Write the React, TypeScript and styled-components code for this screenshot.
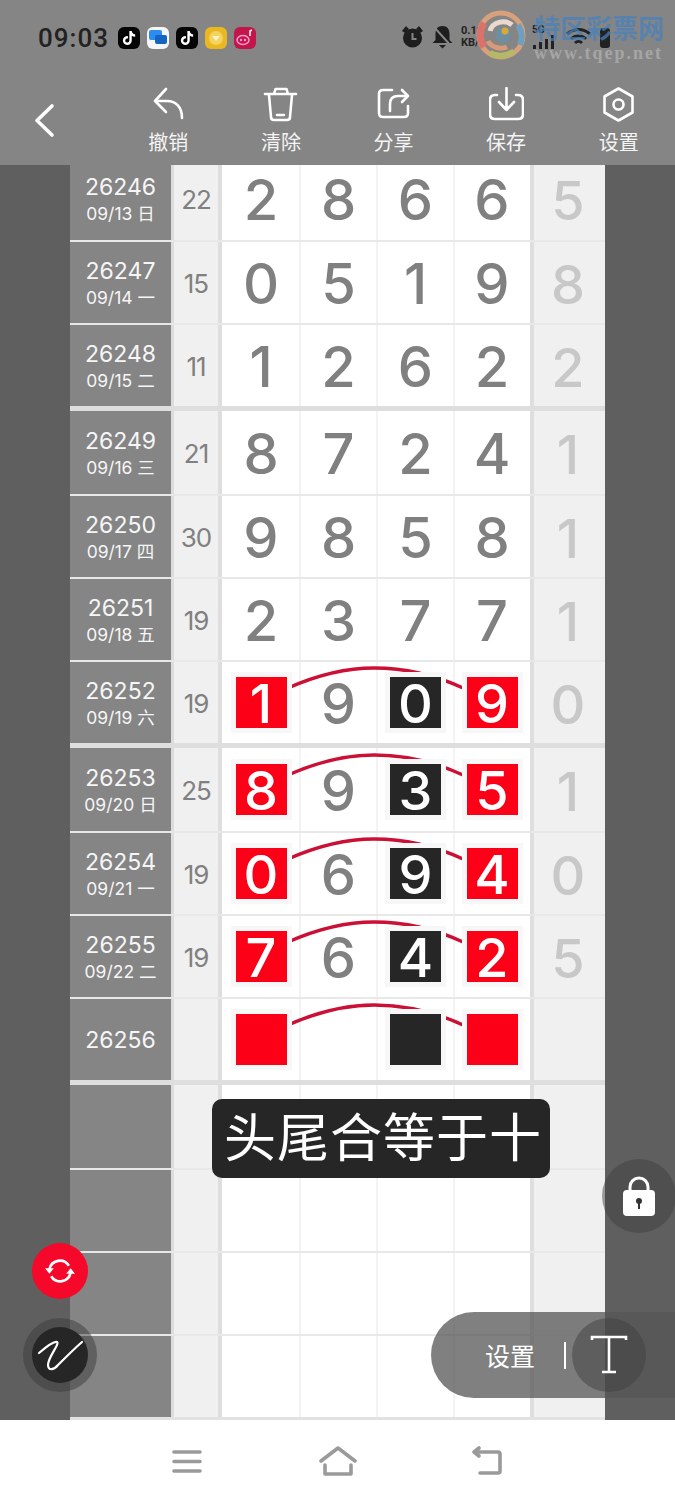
import { createGlobalStyle } from 'styled-components';
import styled from 'styled-components';
import { FaTiktok } from 'react-icons/fa6';

type Row = {
  id: string;
  date?: string;
  sum?: string;
  digits?: string[];
  tail?: string;
  marked?: boolean;
  first?: boolean;
  last?: boolean;
};

const rows: Row[] = [
  { id: '26246', date: '09/13 日', sum: '22', digits: ['2', '8', '6', '6'], tail: '5', first: true },
  { id: '26247', date: '09/14 一', sum: '15', digits: ['0', '5', '1', '9'], tail: '8' },
  { id: '26248', date: '09/15 二', sum: '11', digits: ['1', '2', '6', '2'], tail: '2', last: true },
  { id: '26249', date: '09/16 三', sum: '21', digits: ['8', '7', '2', '4'], tail: '1', first: true },
  { id: '26250', date: '09/17 四', sum: '30', digits: ['9', '8', '5', '8'], tail: '1' },
  { id: '26251', date: '09/18 五', sum: '19', digits: ['2', '3', '7', '7'], tail: '1' },
  { id: '26252', date: '09/19 六', sum: '19', digits: ['1', '9', '0', '9'], tail: '0', marked: true, last: true },
  { id: '26253', date: '09/20 日', sum: '25', digits: ['8', '9', '3', '5'], tail: '1', marked: true, first: true },
  { id: '26254', date: '09/21 一', sum: '19', digits: ['0', '6', '9', '4'], tail: '0', marked: true },
  { id: '26255', date: '09/22 二', sum: '19', digits: ['7', '6', '4', '2'], tail: '5', marked: true },
  { id: '26256', digits: ['', '', '', ''], marked: true, last: true },
  { id: '', digits: ['', '', '', ''], first: true },
  { id: '', digits: ['', '', '', ''] },
  { id: '', digits: ['', '', '', ''] },
  { id: '', digits: ['', '', '', ''] },
];

const GlobalStyle = createGlobalStyle`
  html, body {
    margin: 0;
    padding: 0;
    background: #ffffff;
    font-family: Inter, "Noto Sans CJK SC", sans-serif;
  }
`;

const Page = styled.div`
  position: relative;
  width: 675px;
  height: 1500px;
  overflow: hidden;
  display: flex;
  flex-direction: column;
`;

const Header = styled.header`
  height: 165px;
  flex: none;
  background: #858585;
`;

const StatusBar = styled.div`
  height: 75px;
  display: flex;
  align-items: center;
  padding-left: 38px;
  box-sizing: border-box;
`;

const Clock = styled.span`
  font-family: Roboto, sans-serif;
  font-size: 26px;
  font-weight: 500;
  letter-spacing: 1px;
  color: #222222;
  margin-right: 9px;
`;

const AppIcons = styled.div`
  display: flex;
  gap: 7px;
`;

const AppIcon = styled.div<{ $bg: string }>`
  width: 22px;
  height: 22px;
  border-radius: 6px;
  background: ${(p) => p.$bg};
  display: flex;
  align-items: center;
  justify-content: center;
  color: #ffffff;
  font-size: 14px;
`;

const SystemIcons = styled.div`
  position: absolute;
  left: 401px;
  top: 25px;
  display: flex;
  align-items: center;
  gap: 7px;
`;

const NetSpeed = styled.div`
  width: 64px;
  font-family: Roboto, sans-serif;
  font-size: 11px;
  font-weight: 700;
  line-height: 12px;
  color: #222222;
`;

const SignalBlock = styled.div`
  display: flex;
  flex-direction: column;
  font-family: Roboto, sans-serif;
  font-size: 10px;
  font-weight: 700;
  line-height: 10px;
  color: #222222;
`;

const Watermark = styled.div`
  position: absolute;
  left: 476px;
  top: 9px;
  display: flex;
  gap: 8px;
`;

const WatermarkText = styled.div`
  display: flex;
  flex-direction: column;
  width: 134px;
`;

const WatermarkTitle = styled.span`
  font-family: "Noto Sans CJK SC", sans-serif;
  font-size: 26px;
  font-weight: 700;
  line-height: 35px;
  color: rgba(70, 130, 190, 0.72);
`;

const WatermarkUrl = styled.span`
  font-family: "Liberation Serif", serif;
  font-size: 18px;
  font-weight: 700;
  line-height: 18px;
  letter-spacing: 2px;
  white-space: nowrap;
  color: #a6a6a6;
`;

const Toolbar = styled.div`
  height: 90px;
  display: flex;
`;

const BackButton = styled.div`
  width: 112px;
  flex: none;
  padding: 28px 0 0 33px;
  box-sizing: border-box;
`;

const ToolItem = styled.div`
  flex: 1;
  display: flex;
  flex-direction: column;
  align-items: center;
  padding-top: 12px;
`;

const ToolLabel = styled.span`
  margin-top: 6px;
  font-family: "Noto Sans CJK SC", sans-serif;
  font-size: 20px;
  line-height: 28px;
  color: #f4f4f4;
`;

const ToolIcon = styled.svg.attrs({ viewBox: '0 0 35 35', fill: 'none' })`
  width: 35px;
  height: 35px;
  stroke: #ffffff;
  stroke-width: 2.6;
  stroke-linecap: round;
  stroke-linejoin: round;
`;

const Main = styled.main`
  flex: 1;
  background: #5f5f5f;
  display: flex;
  justify-content: center;
  overflow: hidden;
`;

const Table = styled.div`
  width: 535px;
  height: 1255px;
  overflow: hidden;
`;

const TableRow = styled.div<{ $first?: boolean; $last?: boolean }>`
  display: grid;
  grid-template-columns: 104px 48px 308px 75px;
  height: ${(p) => (p.$first ? 83 : 81)}px;
  border-bottom: ${(p) => (p.$last ? '5px solid #dedede' : '2px solid #e8e8e8')};
  &:first-child {
    margin-top: -8px;
  }
  &:last-child {
    border-bottom-width: 3px;
    border-bottom-color: #e2e2e2;
  }
`;

const LabelCell = styled.div`
  background: #858585;
  border-right: 3px solid #dcdcdc;
  display: flex;
  flex-direction: column;
  align-items: center;
  justify-content: center;
  color: #f6f6f6;
`;

const IssueId = styled.span`
  font-size: 23px;
  line-height: 30px;
`;

const IssueDate = styled.span`
  font-size: 17.5px;
  line-height: 24px;
  white-space: nowrap;
`;

const SumCell = styled.div`
  background: #f0f0f0;
  border-right: 4px solid #dedede;
  display: flex;
  align-items: center;
  justify-content: center;
  padding-top: 2px;
  font-size: 26px;
  letter-spacing: -1px;
  color: #808080;
`;

const DigitGrid = styled.div`
  position: relative;
  display: grid;
  grid-template-columns: 78px 77px 77px 76px;
  background: #ffffff;
`;

const DigitCell = styled.div`
  display: flex;
  align-items: center;
  justify-content: center;
  font-size: 56px;
  font-weight: 500;
  color: #808080;
  box-shadow: 1px 0 #f3f3f3, inset -1px 0 #f3f3f3;
  &:last-of-type {
    box-shadow: none;
  }
`;

const PlainDigit = styled.span`
  padding-top: 3px;
`;

const Square = styled.div<{ $color: string }>`
  position: relative;
  z-index: 1;
  width: 51px;
  height: 51px;
  background: ${(p) => p.$color};
  box-shadow: 0 0 0 5px #f7f7f7;
  color: #ffffff;
  display: flex;
  align-items: center;
  justify-content: center;
  padding-top: 1px;
  box-sizing: border-box;
  font-size: 54px;
  font-weight: 500;
  line-height: 51px;
`;

const ArcLine = styled.svg.attrs({ viewBox: '0 0 308 40', fill: 'none' })`
  position: absolute;
  left: 0;
  top: calc(50% - 40px);
  width: 308px;
  height: 40px;
  stroke: #cc0f35;
  stroke-width: 3.4;
`;

const TailCell = styled.div`
  background: #f0f0f0;
  border-left: 4px solid #dedede;
  display: flex;
  align-items: center;
  justify-content: center;
  padding: 3px 3px 0 0;
  font-size: 54px;
  font-weight: 500;
  color: #c8c8c8;
`;

const Toast = styled.div`
  position: absolute;
  left: 212px;
  top: 1099px;
  width: 338px;
  height: 79px;
  padding-left: 4px;
  box-sizing: border-box;
  border-radius: 10px;
  background: #262626;
  color: #ffffff;
  font-family: "Noto Sans CJK SC", sans-serif;
  font-size: 52px;
  letter-spacing: 1px;
  line-height: 71px;
  text-align: center;
  white-space: nowrap;
`;

const RoundButton = styled.div<{ $left: number; $top: number; $size: number; $bg: string }>`
  position: absolute;
  left: ${(p) => p.$left}px;
  top: ${(p) => p.$top}px;
  width: ${(p) => p.$size}px;
  height: ${(p) => p.$size}px;
  border-radius: 50%;
  background: ${(p) => p.$bg};
  display: flex;
  align-items: center;
  justify-content: center;
`;

const SignInner = styled.div`
  width: 56px;
  height: 56px;
  border-radius: 50%;
  background: #262626;
  display: flex;
  align-items: center;
  justify-content: center;
`;

const SettingsPill = styled.div`
  position: absolute;
  left: 431px;
  top: 1312px;
  width: 244px;
  height: 86px;
  border-radius: 43px 0 0 43px;
  background: rgba(85, 85, 85, 0.75);
  display: flex;
  align-items: center;
  padding-left: 54px;
  box-sizing: border-box;
`;

const PillLabel = styled.span`
  width: 50px;
  font-family: "Noto Sans CJK SC", sans-serif;
  font-size: 25px;
  line-height: 30px;
  white-space: nowrap;
  color: #ffffff;
`;

const PillDivider = styled.span`
  width: 2px;
  height: 27px;
  margin-left: 29px;
  background: #ffffff;
`;

const TextTool = styled.div`
  width: 74px;
  height: 74px;
  margin-left: 6px;
  border-radius: 50%;
  background: rgba(64, 64, 64, 0.5);
  display: flex;
  align-items: center;
  justify-content: center;
`;

const BottomNav = styled.nav`
  height: 80px;
  flex: none;
  background: #ffffff;
  display: grid;
  grid-template-columns: 150px 150px 150px;
  justify-content: center;
  align-items: center;
  justify-items: center;
  padding-top: 2px;
  box-sizing: border-box;
`;

const NavIcon = styled.svg.attrs({ viewBox: '0 0 38 30', fill: 'none' })`
  width: 38px;
  height: 30px;
  stroke: #9a9a9a;
  stroke-width: 3.6;
  stroke-linecap: round;
  stroke-linejoin: round;
`;

function Logo() {
  return (
    <svg width="50" height="52" viewBox="0 0 50 52" fill="none">
      <circle cx="25" cy="26" r="22" stroke="#d9a07c" strokeWidth="5" />
      <path d="M8 14a22 22 0 0 0 0 24" stroke="#d8726a" strokeWidth="7" />
      <path d="M42 16a22 22 0 0 1 2 20" stroke="#6f9fbf" strokeWidth="6" />
      <path d="M14 44a22 22 0 0 0 24-2" stroke="#b3b966" strokeWidth="6" />
      <path d="M14 22c2-9 15-12 22-6" stroke="#e9d9cf" strokeWidth="5" />
      <path d="M12 32c3 6 12 9 19 6" stroke="#d89a78" strokeWidth="5" />
      <circle cx="27" cy="26" r="8" fill="#6f8e9f" />
      <circle cx="29" cy="22" r="3.500" fill="#d9a93a" />
    </svg>
  );
}

function StatusRight() {
  return (
    <SystemIcons>
      <svg width="23" height="24" viewBox="0 0 23 24" fill="#1e1e1e">
        <circle cx="11.500" cy="13" r="9.500" />
        <path d="M1 6l4-5 3 3-4 4zM22 6l-4-5-3 3 4 4z" />
        <path d="M11.500 8v6h4" stroke="#858585" strokeWidth="2" fill="none" />
      </svg>
      <svg width="23" height="24" viewBox="0 0 23 24" fill="#1e1e1e">
        <path d="M11.500 1c5 0 7 3.500 7 8v6l3 3H1.500l3-3V9c0-4.500 2-8 7-8z" />
        <path d="M8 20h7l-3.500 3.500z" />
        <path d="M3 2l18 20" stroke="#858585" strokeWidth="2" />
      </svg>
      <NetSpeed>
        0.10
        <br />
        KB/s
      </NetSpeed>
      <SignalBlock>
        5G
        <svg width="26" height="14" viewBox="0 0 26 14" fill="#222">
          <rect x="1" y="10" width="3" height="4" />
          <rect x="7" y="7" width="3" height="7" />
          <rect x="13" y="4" width="3" height="10" />
          <rect x="19" y="0" width="3" height="14" />
        </svg>
      </SignalBlock>
      <svg width="27" height="22" viewBox="0 0 27 22" fill="none" stroke="#222" strokeWidth="3">
        <path d="M2 8c7-6 16-6 23 0M6 13c4-4 11-4 15 0M10 17c2-2 5-2 7 0" />
      </svg>
      <svg width="12" height="22" viewBox="0 0 12 22" fill="#222">
        <rect x="1" y="2" width="10" height="20" rx="3" />
      </svg>
    </SystemIcons>
  );
}

function Tools() {
  return (
    <Toolbar>
      <BackButton>
        <svg width="24" height="36" viewBox="0 0 24 36" fill="none" stroke="#fff" strokeWidth="3.6" strokeLinecap="round" strokeLinejoin="round">
          <path d="M19 3L4 17.5 19 32" />
        </svg>
      </BackButton>
      <ToolItem>
        <ToolIcon>
          <path d="M15 2L4 14l11 11M4 14h12c9 0 15 6 15 17" />
        </ToolIcon>
        <ToolLabel>撤销</ToolLabel>
      </ToolItem>
      <ToolItem>
        <ToolIcon>
          <path d="M2 7h31M11 7l1.500-5h11L25 7M6 8l2 22q0 3 3 3h13q3 0 3-3l2-22M14 28h7" />
        </ToolIcon>
        <ToolLabel>清除</ToolLabel>
      </ToolItem>
      <ToolItem>
        <ToolIcon>
          <path d="M16 3H7Q3 3 3 7v19q0 4 4 4h21q4 0 4-4v-7M14 24v-7q0-8 8-8h10M26 3l6 6-6 6" />
        </ToolIcon>
        <ToolLabel>分享</ToolLabel>
      </ToolItem>
      <ToolItem>
        <ToolIcon>
          <path d="M8 8H6Q1 8 1 13v14q0 5 5 5h23q5 0 5-5V13q0-5-5-5h-2M17.500 1v22M10 15l7.500 8 7.500-8" />
        </ToolIcon>
        <ToolLabel>保存</ToolLabel>
      </ToolItem>
      <ToolItem>
        <ToolIcon>
          <path d="M17.500 1.500l14 8v16l-14 8-14-8v-16z" />
          <circle cx="17.500" cy="17.500" r="5" />
        </ToolIcon>
        <ToolLabel>设置</ToolLabel>
      </ToolItem>
    </Toolbar>
  );
}

function TableLine({ row }: { row: Row }) {
  const digits = row.digits ?? [];
  return (
    <TableRow $first={row.first} $last={row.last}>
      <LabelCell>
        {row.id && <IssueId>{row.id}</IssueId>}
        {row.date && <IssueDate>{row.date}</IssueDate>}
      </LabelCell>
      <SumCell>{row.sum}</SumCell>
      <DigitGrid>
        {row.marked && (
          <ArcLine>
            <path d="M66 25C100 10 130 5 152 5C185 5 215 13 241 25" />
          </ArcLine>
        )}
        {digits.map((d, i) => (
          <DigitCell key={i}>
            {row.marked && i !== 1 ? (
              <Square $color={i === 2 ? '#262626' : '#fb0016'}>{d}</Square>
            ) : (
              <PlainDigit>{d}</PlainDigit>
            )}
          </DigitCell>
        ))}
      </DigitGrid>
      <TailCell>{row.tail}</TailCell>
    </TableRow>
  );
}

export default function App() {
  return (
    <Page>
      <GlobalStyle />
      <Header>
        <StatusBar>
          <Clock>09:03</Clock>
          <AppIcons>
            <AppIcon $bg="#050505">
              <FaTiktok />
            </AppIcon>
            <AppIcon $bg="#f4f6fa">
              <svg width="18" height="16" viewBox="0 0 18 16">
                <rect x="0" y="0" width="13" height="10" rx="2" fill="#2d8cf0" />
                <rect x="6" y="5" width="12" height="9" rx="2" fill="#1565c0" />
              </svg>
            </AppIcon>
            <AppIcon $bg="#050505">
              <FaTiktok />
            </AppIcon>
            <AppIcon $bg="#e9b820">
              <svg width="16" height="16" viewBox="0 0 16 16">
                <circle cx="8" cy="8" r="7" fill="#f4d35e" />
                <path d="M4 6l4 5 4-5z" fill="#fff4c8" />
              </svg>
            </AppIcon>
            <AppIcon $bg="#c2154a">
              <svg width="20" height="18" viewBox="0 0 20 18" fill="none">
                <ellipse cx="8" cy="11" rx="6" ry="4.500" stroke="#f9c" strokeWidth="1.500" />
                <circle cx="6" cy="11" r="1.200" fill="#f9c" />
                <circle cx="10" cy="11" r="1.200" fill="#f9c" />
                <path d="M15 7V2l2-1" stroke="#fff" strokeWidth="1.500" />
              </svg>
            </AppIcon>
          </AppIcons>
        </StatusBar>
        <Tools />
      </Header>
      <Main>
        <Table>
          {rows.map((row, i) => (
            <TableLine key={i} row={row} />
          ))}
        </Table>
      </Main>
      <BottomNav>
        <NavIcon>
          <path d="M5 6h26M5 15.500h26M5 25h26" />
        </NavIcon>
        <NavIcon>
          <path d="M2 15L19 2l17 13M6 19v9h26v-9" />
        </NavIcon>
        <NavIcon>
          <path d="M5 6h24q2 0 2 2v17q0 2-2 2H11M10 2L5 6l5 4" />
        </NavIcon>
      </BottomNav>

      <StatusRight />
      <Watermark>
        <Logo />
        <WatermarkText>
          <WatermarkTitle>特区彩票网</WatermarkTitle>
          <WatermarkUrl>www.tqep.net</WatermarkUrl>
        </WatermarkText>
      </Watermark>

      <Toast>头尾合等于十</Toast>

      <RoundButton $left={32} $top={1243} $size={56} $bg="#f5082a">
        <svg width="30" height="30" viewBox="0 0 34 34" fill="none" stroke="#fff" strokeWidth="3">
          <path d="M5 15a12 12 0 0 1 22-4" />
          <path d="M29 19a12 12 0 0 1-22 4" />
          <path d="M0 14h10l-5 6zM34 20H24l5-6z" fill="#fff" stroke="none" />
        </svg>
      </RoundButton>
      <RoundButton $left={23} $top={1318} $size={74} $bg="rgba(60, 60, 60, 0.5)">
        <SignInner>
          <svg width="56" height="56" viewBox="0 0 56 56" fill="none" stroke="#fff" strokeWidth="2.2" strokeLinecap="round">
            <path d="M7 26C14 20 22 14 25 15C28 17 16 30 16 38C16 44 22 43 26 38C34 30 42 22 50 15" />
          </svg>
        </SignInner>
      </RoundButton>
      <RoundButton $left={602} $top={1159} $size={74} $bg="rgba(64, 64, 64, 0.5)">
        <svg width="34" height="42" viewBox="0 0 34 42">
          <path d="M8 18v-6a9 9 0 0 1 18 0v6" fill="none" stroke="#fff" strokeWidth="3" />
          <rect x="1" y="15" width="32" height="26" rx="4" fill="#fff" />
          <circle cx="17" cy="26" r="3" fill="#333" />
          <rect x="16" y="27" width="2" height="7" fill="#333" />
        </svg>
      </RoundButton>
      <SettingsPill>
        <PillLabel>设置</PillLabel>
        <PillDivider />
        <TextTool>
          <svg width="38" height="40" viewBox="0 0 38 40" fill="none" stroke="#fff" strokeWidth="2.6">
            <path d="M2 5V2h34v3M19 2v35M12 37h14" />
          </svg>
        </TextTool>
      </SettingsPill>
    </Page>
  );
}
